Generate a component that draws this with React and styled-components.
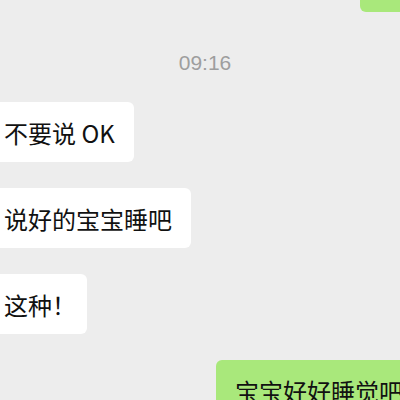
import styled, { createGlobalStyle } from "styled-components";

const GlobalStyle = createGlobalStyle`
  html, body {
    margin: 0;
    padding: 0;
    background: #ededed;
  }
`;

const Page = styled.div`
  width: 400px;
  height: 400px;
  overflow: hidden;
  background: #ededed;
  display: flex;
  flex-direction: column;
  font-family: "Noto Sans CJK SC", "Noto Sans", sans-serif;
`;

const Row = styled.div`
  display: flex;
  justify-content: ${(p) => (p.$out ? "flex-end" : "flex-start")};
  margin-top: ${(p) => p.$top || 0}px;
  flex-shrink: 0;
`;

const Bubble = styled.div`
  height: ${(p) => p.$h || 60}px;
  display: flex;
  align-items: center;
  padding: 0 19px;
  border-radius: 6px;
  background: ${(p) => (p.$out ? "#a9e87b" : "#ffffff")};
  color: #111111;
  font-size: 24px;
  white-space: nowrap;
  margin-left: ${(p) => (p.$out ? 0 : -15)}px;
  margin-right: ${(p) => (p.$out ? -22 : 0)}px;
  flex-shrink: 0;
`;

const StubBubble = styled(Bubble)`
  width: 62px;
  padding: 0;
  margin-top: -40px;
`;

const Punct = styled.span`
  margin-right: -8px;
`;

const Time = styled.div`
  margin-top: 39px;
  margin-bottom: 27px;
  height: 24px;
  line-height: 24px;
  text-align: center;
  padding-left: 10px;
  font-family: "Liberation Sans", "Noto Sans", sans-serif;
  font-size: 21px;
  color: #9e9e9e;
  flex-shrink: 0;
`;

const messages = [
  { text: "不要说 OK" },
  { text: "说好的宝宝睡吧" },
  { text: "这种", punct: "！" },
  { text: "宝宝好好睡觉吧", out: true },
];

export default function App() {
  return (
    <>
      <GlobalStyle />
      <Page>
        <Row $out>
          <StubBubble $out $h={52} />
        </Row>
        <Time>09:16</Time>
        {messages.map((m, i) => (
          <Row key={i} $out={m.out} $top={i === 0 ? 0 : 26}>
            <Bubble $out={m.out}>
              {m.text}
              {m.punct && <Punct>{m.punct}</Punct>}
            </Bubble>
          </Row>
        ))}
      </Page>
    </>
  );
}
